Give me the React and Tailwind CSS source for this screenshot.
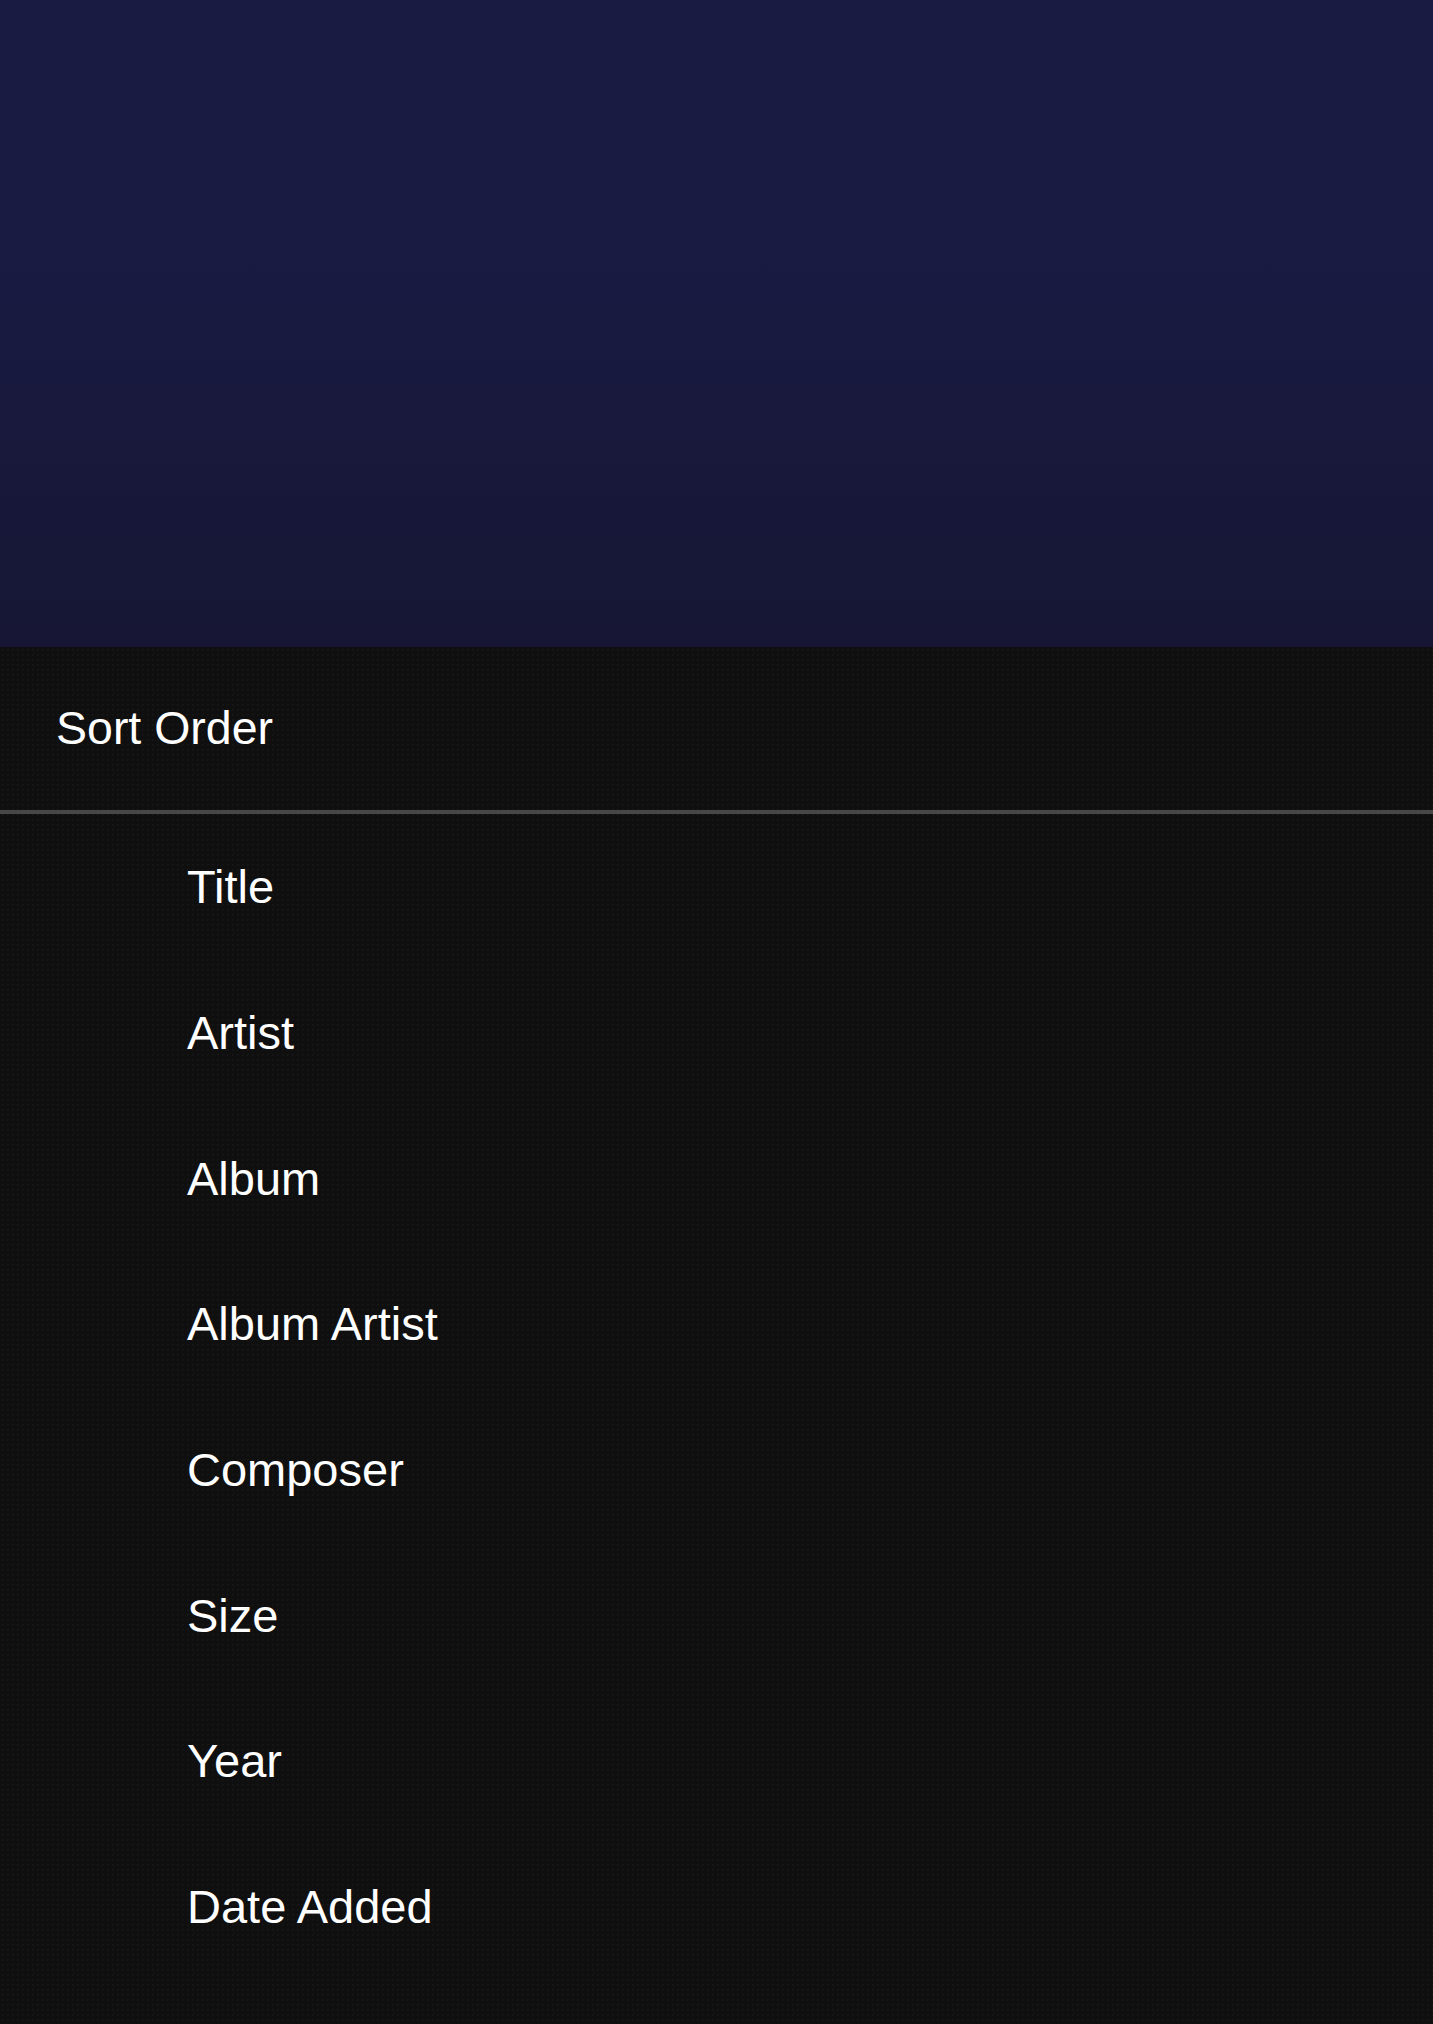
const opcoes = [
  'Title',
  'Artist',
  'Album',
  'Album Artist',
  'Composer',
  'Size',
  'Year',
  'Date Added'
]

function App() {
  return (
    <main className="min-h-[2024px] w-full bg-[#0f0f0f] font-['Liberation_Sans',Arial,sans-serif] text-white">
      <section className="h-[647px] bg-gradient-to-b from-[#1a1b43] via-[#191a40] to-[#161634]" />

      <div className="bg-[#0f0f0f] bg-[radial-gradient(#171717_1px,transparent_1px)] bg-[size:5px_5px]">
        <header className="h-[163px] flex items-center pl-[56px]">
          <h1 className="text-[46.5px] leading-none font-normal">Sort Order</h1>
        </header>

        <div className="h-[4px] bg-[#474747]" />

        <ul className="pb-[42px]">
          {opcoes.map((opcao) => (
            <Opcao key={opcao} texto={opcao} />
          ))}
        </ul>
      </div>
    </main>
  )
}

function Opcao({ texto }) {
  return (
    <li className="h-[145.7px] flex items-center pl-[187px]">
      <span className="text-[47px] leading-none">{texto}</span>
    </li>
  )
}

export default App
